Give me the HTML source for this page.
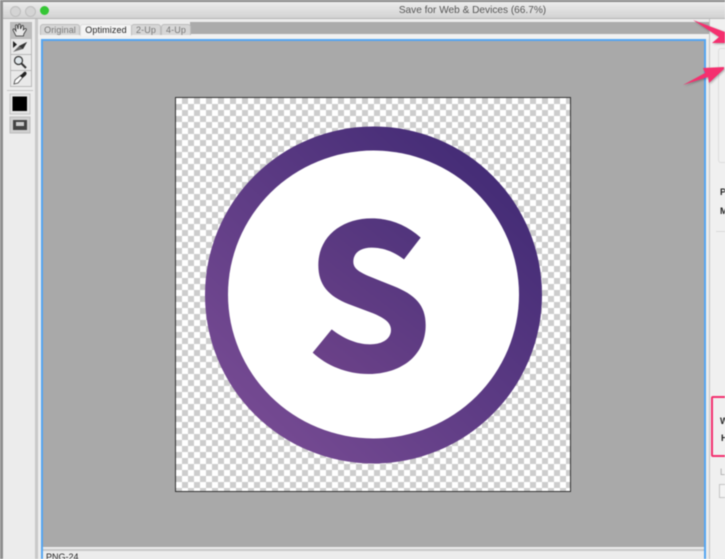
<!DOCTYPE html>
<html><head><meta charset="utf-8">
<style>
html,body{margin:0;padding:0;background:#ececec}
#p{position:relative;width:725px;height:559px;overflow:hidden;background:#ececec;font-family:"Liberation Sans",sans-serif;filter:blur(.4px)}
.a{position:absolute}
.tab{position:absolute;top:24px;height:10px;background:#d6d6d6;border:1px solid #bdbdbd;border-bottom:0;border-radius:3px 3px 0 0;font-size:9px;line-height:10px;text-align:center;color:#777;letter-spacing:.1px}
.tb{position:absolute;left:10px;width:20px;height:15px;background:#e9e9e9;border:1px solid #b9b9b9}
.lt{position:absolute;font-size:9px;line-height:10px;color:#222;font-weight:bold}
</style></head>
<body><div id="p">
<div class="a" style="left:0;top:0;width:725px;height:2px;background:#8a8a8a"></div>
<div class="a" style="left:0;top:0;width:3px;height:559px;background:#8f8f8f"></div>
<div class="a" style="left:3px;top:2px;width:722px;height:16px;background:linear-gradient(#ececec,#d2d2d2);border-bottom:1px solid #b5b5b5;border-radius:3px 3px 0 0"></div>
<div class="a" style="left:9.5px;top:5.5px;width:9px;height:9px;border-radius:50%;background:#d4d4d4;border:.5px solid #bdbdbd"></div>
<div class="a" style="left:24.5px;top:5.5px;width:9px;height:9px;border-radius:50%;background:#d4d4d4;border:.5px solid #bdbdbd"></div>
<div class="a" style="left:39.5px;top:5.5px;width:9px;height:9px;border-radius:50%;background:#35c635"></div>
<div class="a" style="left:300px;width:345px;top:4px;font-size:10.1px;line-height:13px;text-align:center;color:#555">Save for Web &amp; Devices (66.7%)</div>

<!-- sidebar divider -->
<div class="a" style="left:35px;top:19px;width:3px;height:540px;background:#c9c9c9"></div>

<!-- tools -->
<div class="tb" style="top:22px;background:#bdbdbd;height:15px"></div>
<div class="tb" style="top:38px"></div>
<div class="tb" style="top:54px"></div>
<div class="tb" style="top:70px"></div>
<svg class="a" style="left:0;top:0" width="36" height="140" viewBox="0 0 36 140">
<path d="M16 36 L13 30 Q13 28.500 14.500 29 L16 31 L15.500 25.500 Q16.300 24 17.300 25.500 L18 29 L18.500 24.500 Q19.500 23.500 20.300 24.500 L20.500 29 L22 25.500 Q23.300 25 23.500 26.500 L23.300 30 L25 28.500 Q26.800 28.500 26.300 30 L23.800 34 L23.500 36 Z" fill="#e8e8e8" stroke="#333" stroke-width=".8"/>
<path d="M13 41 L13 48 L17 44.500 Z" fill="#222"/>
<path d="M13 52 L19 46 L27 42 L23 49 L16 51 Z" fill="#666"/>
<path d="M19 46 L27 42 L23 49 Z" fill="#333"/>
<circle cx="18.500" cy="60.500" r="4" fill="#dfe6ea" stroke="#333" stroke-width="1.200"/>
<path d="M21.500 63.500 L26 68" stroke="#333" stroke-width="2"/>
<path d="M14 84 L15 80 L21 75 L23 77 L18 83 Z" fill="#fff" stroke="#444" stroke-width=".8"/>
<path d="M20 76 L24 72 Q26 71 26.500 73 Q27 74 25 76 L22.500 78 Z" fill="#222"/>
<rect x="7" y="90" width="26" height="1" fill="#c6c6c6"/>
<rect x="10" y="94" width="20" height="20" fill="#e4e4e4" stroke="#c4c4c4"/>
<rect x="12.500" y="96.500" width="14.500" height="14.500" fill="#000"/>
<rect x="10" y="117" width="20" height="16" fill="#d0d0d0" stroke="#bdbdbd"/>
<rect x="13" y="120" width="14" height="10" fill="#444"/>
<rect x="16" y="122" width="8" height="4" fill="#ccc"/>
</svg>

<!-- tabs -->
<div class="a" style="left:190px;top:22px;width:520px;height:12px;background:#ababab"></div>
<div class="a" style="left:38px;top:34px;width:672px;height:5px;background:#f1f1f1"></div>
<div class="tab" style="left:40px;width:38px">Original</div>
<div class="tab" style="left:80px;width:50px;background:#f4f4f4;color:#222;height:11px;border-color:#ddd">Optimized</div>
<div class="tab" style="left:131px;width:28px">2-Up</div>
<div class="tab" style="left:161px;width:28px">4-Up</div>

<!-- canvas -->
<div class="a" style="left:41px;top:39px;width:665px;height:520px;box-sizing:border-box;border:2px solid #55a6f2;border-bottom:0;background:#a9a9a9"></div>
<div class="a" style="left:43px;top:547px;width:661px;height:12px;background:#ececec"></div>
<div class="a" style="left:43px;top:549px;width:661px;height:2px;background:#c8c8c8"></div>
<div class="a" style="left:46px;top:552px;font-size:9px;line-height:11px;color:#222">PNG-24</div>

<!-- checker image -->
<div class="a" style="left:175px;top:97px;width:396px;height:395px;box-sizing:border-box;border:1px solid #333;background-color:#fff;background-image:conic-gradient(#cdcdcd 25%,#fff 25% 50%,#cdcdcd 50% 75%,#fff 75%);background-size:12px 12px;background-position:0 0"></div>
<svg class="a" style="left:0;top:0" width="725" height="559" viewBox="0 0 725 559">
<defs>
<linearGradient id="g" gradientUnits="userSpaceOnUse" x1="255" y1="420" x2="495" y2="170">
<stop offset="0" stop-color="#754a92"/><stop offset="1" stop-color="#442c76"/>
</linearGradient>
<linearGradient id="h" gradientUnits="userSpaceOnUse" x1="80" y1="500" x2="400" y2="80">
<stop offset="0" stop-color="#6c4289"/><stop offset="1" stop-color="#50347c"/>
</linearGradient>
</defs>
<circle cx="373.500" cy="295" r="168.500" fill="url(#g)"/>
<ellipse cx="373.500" cy="294.500" rx="145.500" ry="144" fill="#fff"/>
<g transform="translate(290 200) scale(.33333)">
<path fill="url(#h)" d="M392 113 L342 178 C310 155 280 143 245 143 C210 143 190 160 190 185 C190 205 205 215 240 230 L310 258 C375 284 407 315 407 375 C407 470 330 522 235 522 C170 522 110 497 68 458 L125 388 C160 415 200 433 240 433 C280 433 303 415 303 390 C303 368 285 355 250 340 L175 312 C115 288 85 255 85 195 C85 110 155 55 245 55 C300 55 350 75 392 113 Z"/>
</g>
</svg>

<!-- right panel -->
<div class="a" style="left:709px;top:19px;width:1px;height:540px;background:#c4c4c4"></div>
<div class="a" style="left:710px;top:19px;width:15px;height:540px;background:#f0f0f0"></div>
<div class="a" style="left:718px;top:48px;width:12px;height:115px;border:1px solid #dedede;border-radius:3px;box-sizing:border-box"></div>
<div class="lt" style="left:720px;top:187px">P</div>
<div class="lt" style="left:720px;top:206px">M</div>
<div class="a" style="left:716px;top:231px;width:9px;height:1px;background:#dadada"></div>
<div class="a" style="left:711px;top:396px;width:20px;height:61px;box-sizing:border-box;border:2px solid #f2306f;border-radius:2px"></div>
<div class="lt" style="left:720px;top:416px">W</div>
<div class="lt" style="left:721px;top:433px">H</div>
<div class="lt" style="left:720px;top:467px;color:#aaa;font-weight:normal">L</div>
<div class="a" style="left:719px;top:484px;width:10px;height:14px;box-sizing:border-box;border:1px solid #c4c4c4;background:#f4f4f4"></div>

<!-- arrows -->
<svg class="a" style="left:0;top:0;filter:drop-shadow(1px 1px 1px rgba(0,0,0,.3))" width="725" height="559" viewBox="0 0 725 559">
<path d="M693 20 L725 32 L725 43 L712 43 L719 37 Z" fill="#f5306f"/>
<path d="M683 85 L705 73 L703 68 L724 67 L724 69 L709 83 L708 77 Z" fill="#f5306f"/>
</svg>
</div></body></html>
